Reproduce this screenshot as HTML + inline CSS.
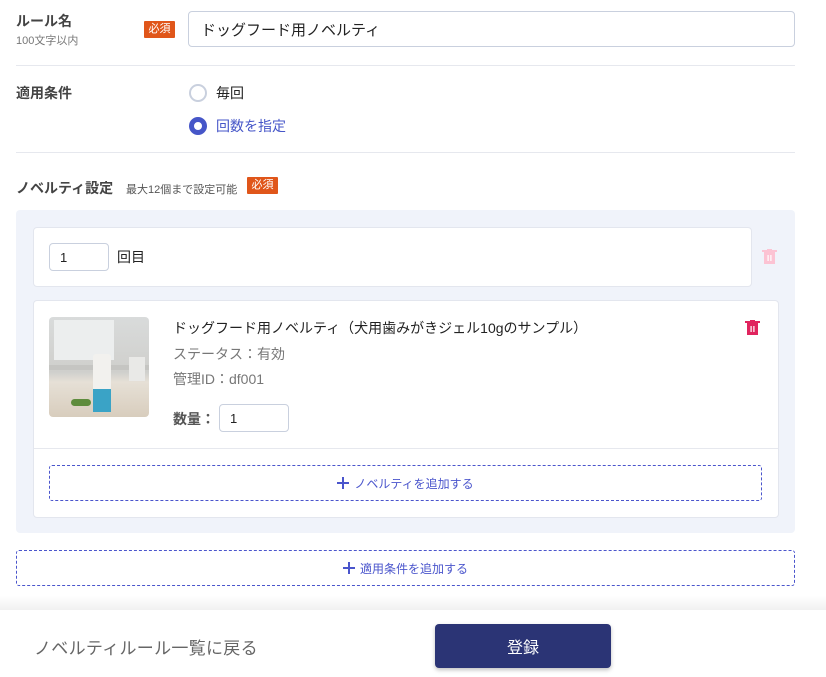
<!DOCTYPE html>
<html><head><meta charset="utf-8"><style>
*{margin:0;padding:0;box-sizing:border-box}
body{width:826px;height:677px;background:#fff;font-family:"Liberation Sans","Noto Sans CJK JP",sans-serif;color:#333;position:relative;overflow:hidden}
.a{position:absolute;white-space:nowrap}
.lbl{font-size:14px;font-weight:bold;color:#444}
.badge{background:#e0561a;color:#fff;font-size:11px;line-height:17px;text-align:center;border-radius:1px}
.hr{height:1px;background:#e6e8ee;left:16px;width:779px}
.inp{border:1px solid #c9d0de;border-radius:4px;background:#fff;font-size:13px;padding-left:10px;display:flex;align-items:center;color:#222}
.dash{border:1px dashed #4a55cc;border-radius:3px;color:#4a55cc;font-size:12px;display:flex;align-items:center;justify-content:center}
.dash svg{margin-right:5px}
</style></head><body>
<div class="a lbl" style="left:16px;top:11px">ルール名</div>
<div class="a" style="left:16px;top:32px;font-size:11px;color:#777">100文字以内</div>
<div class="a badge" style="left:144px;top:21px;width:31px">必須</div>
<div class="a inp" style="left:188px;top:11px;width:607px;height:36px;font-size:15px;padding-left:12px">ドッグフード用ノベルティ</div>
<div class="a hr" style="top:65px"></div>
<div class="a lbl" style="left:16px;top:83px">適用条件</div>
<div class="a" style="left:189px;top:84px;width:18px;height:18px;border:2px solid #c9d0de;border-radius:50%"></div>
<div class="a" style="left:216px;top:83px;font-size:14px;color:#222">毎回</div>
<div class="a" style="left:189px;top:117px;width:18px;height:18px;border:5px solid #4656c8;border-radius:50%;background:#fff"></div>
<div class="a" style="left:216px;top:116px;font-size:14px;color:#4656c8">回数を指定</div>
<div class="a hr" style="top:152px"></div>
<div class="a lbl" style="left:16px;top:178px">ノベルティ設定</div>
<div class="a" style="left:126px;top:181px;font-size:11px;color:#555">最大12個まで設定可能</div>
<div class="a badge" style="left:247px;top:177px;width:31px">必須</div>
<div class="a" style="left:16px;top:210px;width:779px;height:323px;background:#f0f3fa;border-radius:4px"></div>
<div class="a" style="left:33px;top:227px;width:719px;height:60px;background:#fff;border:1px solid #e3e6ee;border-radius:4px"></div>
<div class="a inp" style="left:49px;top:243px;width:60px;height:28px">1</div>
<div class="a" style="left:117px;top:247px;font-size:14px;color:#222">回目</div>
<svg class="a" style="left:762px;top:249px" width="15" height="16" viewBox="0 0 15 16"><rect x="0" y="1" width="15" height="2" fill="#fcc3d3"/><rect x="5" y="0" width="5" height="2" fill="#fcc3d3"/><rect x="2" y="3" width="11" height="12" fill="#fcc3d3"/><rect x="5.5" y="6" width="1.2" height="6" fill="#fff"/><rect x="8.3" y="6" width="1.2" height="6" fill="#fff"/></svg>
<div class="a" style="left:33px;top:300px;width:746px;height:218px;background:#fff;border:1px solid #e3e6ee;border-radius:4px"></div>
<div class="a" style="left:49px;top:317px;width:100px;height:100px;border-radius:4px;overflow:hidden;background:linear-gradient(180deg,#d9dbdb 0%,#cfcfcc 55%,#e6e0d6 65%,#d8cdbd 100%)">
<div style="position:absolute;left:5px;top:3px;width:60px;height:40px;background:#eceeee"></div>
<div style="position:absolute;left:0;top:48px;width:100px;height:5px;background:#c5c5c2"></div>
<div style="position:absolute;left:44px;top:37px;width:18px;height:58px;background:#f2f1ee;border-radius:3px 3px 0 0"></div>
<div style="position:absolute;left:44px;top:72px;width:18px;height:23px;background:#3aa3c6"></div>
<div style="position:absolute;left:22px;top:82px;width:20px;height:7px;background:#5e8c3d;border-radius:4px"></div>
<div style="position:absolute;left:80px;top:40px;width:16px;height:24px;background:#e9e9e7"></div>
</div>
<div class="a" style="left:173px;top:318px;font-size:14px;color:#222">ドッグフード用ノベルティ（犬用歯みがきジェル10gのサンプル）</div>
<div class="a" style="left:173px;top:344px;font-size:14px;color:#777">ステータス：有効</div>
<div class="a" style="left:173px;top:369px;font-size:14px;color:#777">管理ID：df001</div>
<div class="a" style="left:173px;top:409px;font-size:14px;color:#555;font-weight:bold">数量：</div>
<div class="a inp" style="left:219px;top:404px;width:70px;height:28px">1</div>
<svg class="a" style="left:745px;top:320px" width="15" height="16" viewBox="0 0 15 16"><rect x="0" y="1" width="15" height="2" fill="#e0245e"/><rect x="5" y="0" width="5" height="2" fill="#e0245e"/><rect x="2" y="3" width="11" height="12" fill="#e0245e"/><rect x="5.5" y="6" width="1.2" height="6" fill="#fff"/><rect x="8.3" y="6" width="1.2" height="6" fill="#fff"/></svg>
<div class="a" style="left:34px;top:448px;width:744px;height:1px;background:#e6e8ee"></div>
<div class="a dash" style="left:49px;top:465px;width:713px;height:36px"><svg width="12" height="12" viewBox="0 0 12 12"><rect x="5" y="0" width="2" height="12" fill="#4a55cc"/><rect x="0" y="5" width="12" height="2" fill="#4a55cc"/></svg>ノベルティを追加する</div>
<div class="a dash" style="left:16px;top:550px;width:779px;height:36px"><svg width="12" height="12" viewBox="0 0 12 12"><rect x="5" y="0" width="2" height="12" fill="#4a55cc"/><rect x="0" y="5" width="12" height="2" fill="#4a55cc"/></svg>適用条件を追加する</div>
<div class="a" style="left:0;top:596px;width:826px;height:14px;background:linear-gradient(180deg,#fff,#f1f1f1)"></div>
<div class="a" style="left:0;top:610px;width:826px;height:67px;background:#fff"></div>
<div class="a" style="left:34px;top:634px;font-size:17px;color:#666;letter-spacing:0.3px">ノベルティルール一覧に戻る</div>
<div class="a" style="left:435px;top:624px;width:176px;height:44px;background:#2b3475;border-radius:4px;color:#fff;font-size:16px;display:flex;align-items:center;justify-content:center;box-shadow:0 2px 4px rgba(0,0,0,.25)">登録</div>
</body></html>
